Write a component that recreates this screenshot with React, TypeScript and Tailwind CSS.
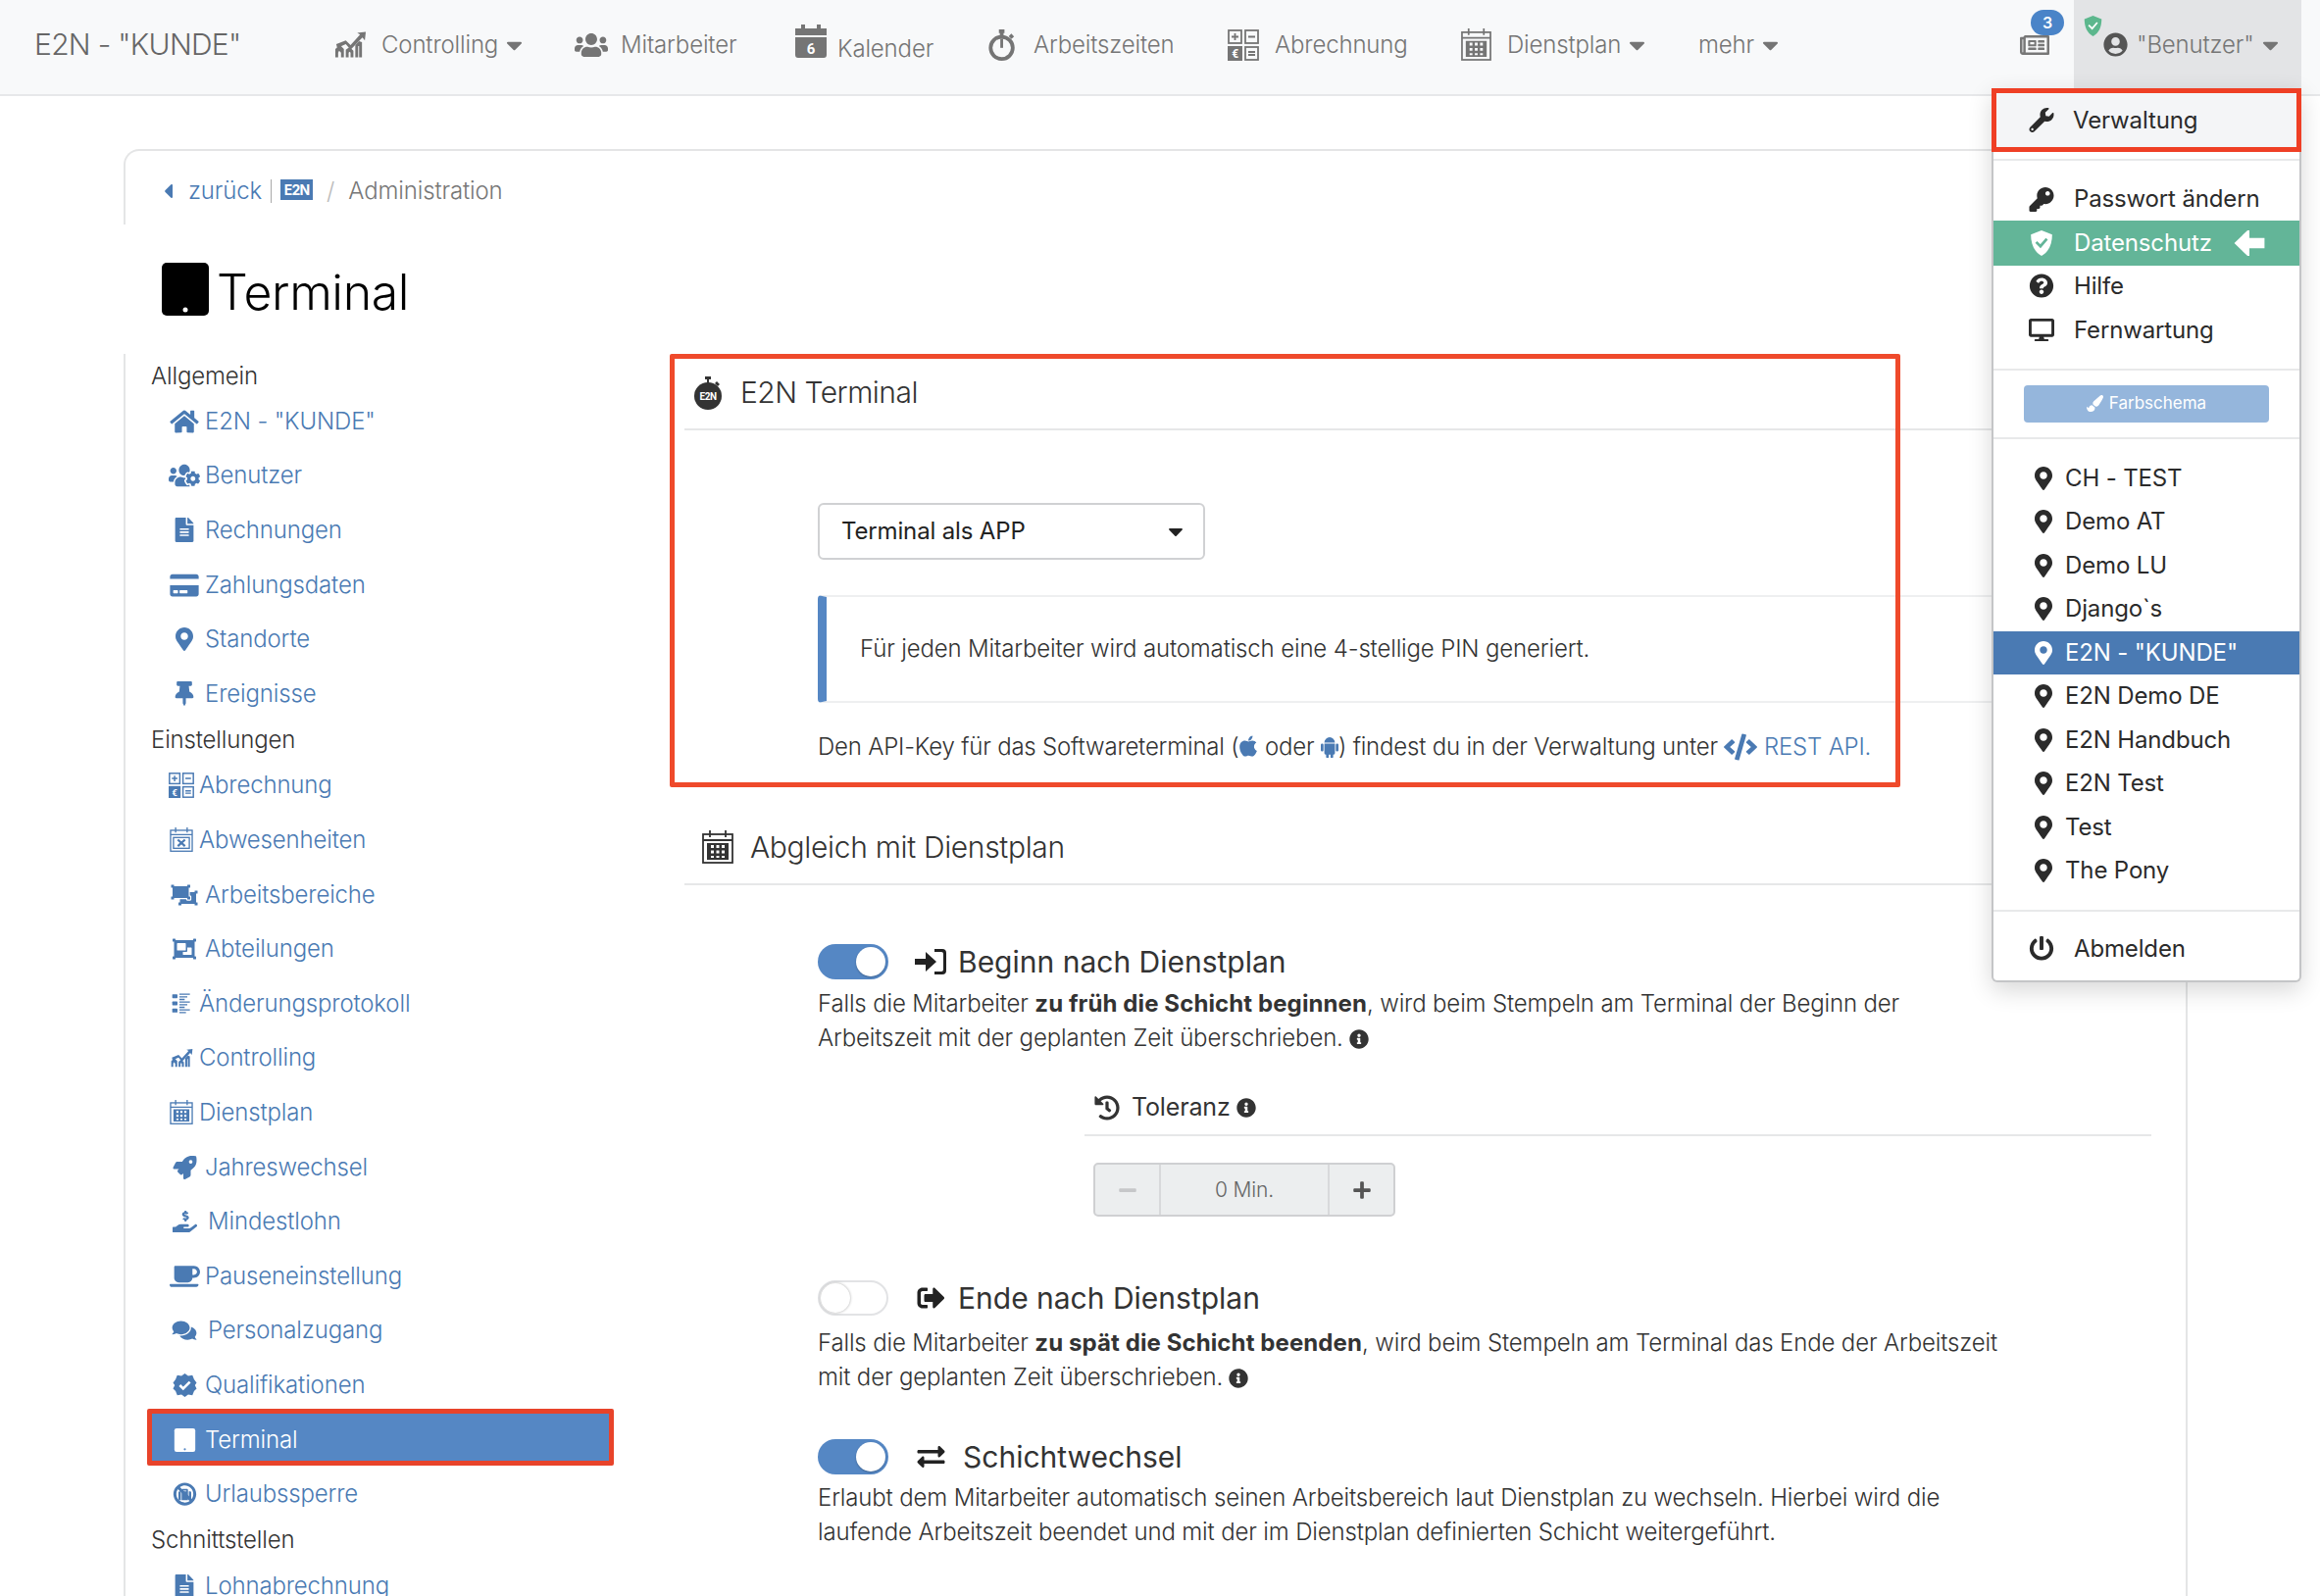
import React from "react";
import {
  FaUsers, FaRegNewspaper, FaUserCircle, FaWrench, FaKey, FaQuestionCircle, FaDesktop, FaPaintBrush,
  FaMapMarkerAlt, FaPowerOff, FaHome, FaUsersCog, FaFileAlt, FaCreditCard, FaThumbtack, FaRocket, FaCoffee,
  FaObjectUngroup, FaObjectGroup, FaHandHoldingUsd, FaSignOutAlt, FaExchangeAlt, FaHistory,
  FaInfoCircle, FaApple, FaCode, FaCaretLeft, FaCaretDown, FaBan, FaSuitcase, FaComments,
  FaMinus, FaPlus,
} from "react-icons/fa";

type IC = { className?: string };

const ChartIcon = ({ className }: IC) => (
  <svg viewBox="0 0 34 28" className={className} fill="currentColor">
    <path d="M1 27v-9l5-4 4 4v9h-3v-5l-2-2-1 2v5zM12 27v-8l4-3 4 4v7h-3v-5l-1-1-1 1v5zM22 27V14l4-4 3 1v16h-3V15l-1 0v12z" />
    <path d="M2 13 L12 9 L17 14 L27 3 L24 1 L33 0 L32 9 L29.500 6 L17 19 L12 13 L3 17z" />
  </svg>
);
const CalSix = ({ className }: IC) => (
  <svg viewBox="0 0 32 34" className={className}>
    <path fill="currentColor" d="M6 0h4v4h12V0h4v4h6v7H0V4h6zM0 13h32v18a3 3 0 0 1-3 3H3a3 3 0 0 1-3-3z" />
    <text x="16" y="30" textAnchor="middle" fontSize="15" fontWeight="700" fill="#fff" fontFamily="Roboto, sans-serif">6</text>
  </svg>
);
const Stopwatch = ({ className }: IC) => (
  <svg viewBox="0 0 30 34" className={className} fill="none" stroke="currentColor">
    <circle cx="14" cy="20" r="12" strokeWidth="4" />
    <path d="M14 20V10" strokeWidth="3" />
    <path d="M11 2h6M14 2v6M23 6l3 3" strokeWidth="4" />
  </svg>
);
const Abrech = ({ className }: IC) => (
  <svg viewBox="0 0 32 32" className={className}>
    <g fill="none" stroke="currentColor" strokeWidth="1.800">
      <rect x="1" y="1" width="13" height="13" /><rect x="18" y="1" width="13" height="13" /><rect x="18" y="18" width="13" height="13" />
      <path d="M7.500 4v7M4 7.500h7M21 7.500h7M21 23h7M21 26h7" />
    </g>
    <rect x="0" y="17" width="15" height="15" fill="currentColor" />
    <text x="7.500" y="29" textAnchor="middle" fontSize="12" fontWeight="700" fill="#fff" fontFamily="Roboto, sans-serif">€</text>
  </svg>
);
const CalGrid = ({ className }: IC) => (
  <svg viewBox="0 0 32 34" className={className}>
    <g fill="none" stroke="currentColor" strokeWidth="1.800">
      <rect x="1" y="4" width="30" height="29" />
      <path d="M8 0v7M24 0v7M1 10h30" />
    </g>
    <path fill="currentColor" d="M5 13h22v17H5zM9 15v3h3v-3zM14.500 15v3h3v-3zM20 15v3h3v-3zM9 20.500v3h3v-3zM14.500 20.500v3h3v-3zM20 20.500v3h3v-3zM9 26v2h3v-2zM14.500 26v2h3v-2zM20 26v2h3v-2z" fillRule="evenodd" />
  </svg>
);
const CalX = ({ className }: IC) => (
  <svg viewBox="0 0 32 34" className={className}>
    <g fill="none" stroke="currentColor" strokeWidth="1.800">
      <rect x="1" y="4" width="30" height="29" /><path d="M8 0v7M24 0v7M1 10h30" />
      <rect x="5" y="14" width="22" height="15" />
    </g>
    <path d="M11 17l10 9M21 17l-10 9" stroke="currentColor" strokeWidth="3" />
  </svg>
);
const ListLock = ({ className }: IC) => (
  <svg viewBox="0 0 30 32" className={className} fill="currentColor">
    <rect x="1" y="2" width="8" height="6" rx="1" /><rect x="1" y="13" width="8" height="6" rx="1" /><rect x="1" y="24" width="8" height="6" rx="1" />
    <path d="M12 1h16v2H12zM12 5h12v2H12zM12 9h8v2h-8zM12 13h16v2H12zM12 17h12v2H12zM12 21h8v2h-8zM12 25h16v2H12zM12 29h10v2H12z" />
  </svg>
);
const Tablet = ({ className, dot = "#fff" }: IC & { dot?: string }) => (
  <svg viewBox="0 0 48 54" className={className}>
    <rect x="0" y="0" width="48" height="54" rx="5" fill="currentColor" />
    <circle cx="24" cy="48" r="2.500" fill={dot} />
  </svg>
);
const Badge = ({ className }: IC) => (
  <svg viewBox="0 0 28 28" className={className}>
    <path fill="currentColor" d="M14 0l4 3 5-1 2 5 3 4-2 3 2 4-3 3-2 5-5-1-4 3-4-3-5 1-2-5-3-3 2-4-2-3 3-4 2-5 5 1z" />
    <path d="M8 14l4 4 8-8" fill="none" stroke="#fff" strokeWidth="3" />
  </svg>
);
const Ban = ({ className }: IC) => (
  <span className={"relative inline-flex items-center justify-center " + (className ?? "")}>
    <FaSuitcase className="absolute h-[13px] w-[13px]" />
    <FaBan className="h-full w-full" />
  </span>
);
const Watch2N = ({ className }: IC) => (
  <svg viewBox="0 0 30 36" className={className}>
    <circle cx="15" cy="21" r="14" fill="currentColor" />
    <path d="M12 1h6v3h-2v4h-2V4h-2zM24 6l3 3-2 2-3-3z" fill="currentColor" />
    <text x="15" y="25" textAnchor="middle" fontSize="10" fontWeight="700" fill="#fff" fontFamily="Roboto, sans-serif">E2N</text>
  </svg>
);
const Android = ({ className }: IC) => (
  <svg viewBox="0 0 20 24" className={className} fill="currentColor">
    <path d="M4 7a6 6 0 0 1 12 0zM4 8h12v11a1.500 1.500 0 0 1-1.500 1.500H14V23a1.500 1.500 0 0 1-3 0v-2.500H9V23a1.500 1.500 0 0 1-3 0v-2.500h-.5A1.500 1.500 0 0 1 4 19zM0 9.500a1.500 1.500 0 0 1 3 0v6a1.500 1.500 0 0 1-3 0zM17 9.500a1.500 1.500 0 0 1 3 0v6a1.500 1.500 0 0 1-3 0zM6.500.5l1.500 2.500M13.500.5L12 3" />
  </svg>
);
const EnterIcon = ({ className }: IC) => (
  <svg viewBox="0 0 33 28" className={className} fill="currentColor">
    <path d="M0 11h11V4l11 10-11 10v-7H0z" />
    <path d="M20 1h8a4 4 0 0 1 4 4v18a4 4 0 0 1-4 4h-8v-3h7a2 2 0 0 0 2-2V6a2 2 0 0 0-2-2h-7z" />
  </svg>
);
const FatArrow = ({ className }: IC) => (
  <svg viewBox="0 0 32 27" className={className} fill="currentColor">
    <path d="M0 13.500L14 0h2v8h16v11H16v8h-2z" />
  </svg>
);

const NAV = [
  { I: ChartIcon, ic: "h-[28px] w-[33px]", t: "Controlling", caret: true, w: "w-[245px]", gap: "ml-[15px]", y: "" },
  { I: FaUsers, ic: "h-[28px] w-[34px]", t: "Mitarbeiter", caret: false, w: "w-[225px]", gap: "ml-[13px]", y: "" },
  { I: CalSix, ic: "h-[34px] w-[32px] -translate-y-[4px]", t: "Kalender", caret: false, w: "w-[197px]", gap: "ml-[11px]", y: "translate-y-[4px]" },
  { I: Stopwatch, ic: "h-[32px] w-[29px]", t: "Arbeitszeiten", caret: false, w: "w-[244px]", gap: "ml-[17px]", y: "" },
  { I: Abrech, ic: "h-[32px] w-[32px]", t: "Abrechnung", caret: false, w: "w-[238px]", gap: "ml-[16px]", y: "" },
  { I: CalGrid, ic: "h-[33px] w-[31px]", t: "Dienstplan", caret: true, w: "w-[242px]", gap: "ml-[16px]", y: "" },
];

type Row = { I: any; ic: string; t: string; tx: string; active?: boolean };
const S1: Row[] = [
  { I: FaHome, ic: "h-[26px] w-[30px]", t: 'E2N - "KUNDE"', tx: "left-[59px]" },
  { I: FaUsersCog, ic: "h-[26px] w-[32px]", t: "Benutzer", tx: "left-[59px]" },
  { I: FaFileAlt, ic: "h-[25px] w-[20px]", t: "Rechnungen", tx: "left-[59px]" },
  { I: FaCreditCard, ic: "h-[26px] w-[30px]", t: "Zahlungsdaten", tx: "left-[59px]" },
  { I: FaMapMarkerAlt, ic: "h-[24px] w-[20px]", t: "Standorte", tx: "left-[59px]" },
  { I: FaThumbtack, ic: "h-[25px] w-[20px]", t: "Ereignisse", tx: "left-[59px]" },
];
const S2: Row[] = [
  { I: Abrech, ic: "h-[26px] w-[26px]", t: "Abrechnung", tx: "left-[53px]" },
  { I: CalX, ic: "h-[25px] w-[24px]", t: "Abwesenheiten", tx: "left-[53px]" },
  { I: FaObjectUngroup, ic: "h-[24px] w-[30px]", t: "Arbeitsbereiche", tx: "left-[59px]" },
  { I: FaObjectGroup, ic: "h-[24px] w-[26px]", t: "Abteilungen", tx: "left-[59px]" },
  { I: ListLock, ic: "h-[25px] w-[20px]", t: "Änderungsprotokoll", tx: "left-[53px]" },
  { I: ChartIcon, ic: "h-[19px] w-[25px]", t: "Controlling", tx: "left-[53px]" },
  { I: CalGrid, ic: "h-[25px] w-[24px]", t: "Dienstplan", tx: "left-[53px]" },
  { I: FaRocket, ic: "h-[24px] w-[25px]", t: "Jahreswechsel", tx: "left-[59px]" },
  { I: FaHandHoldingUsd, ic: "h-[24px] w-[25px]", t: "Mindestlohn", tx: "left-[62px]" },
  { I: FaCoffee, ic: "h-[26px] w-[31px]", t: "Pauseneinstellung", tx: "left-[59px]" },
  { I: FaComments, ic: "h-[22px] w-[26px]", t: "Personalzugang", tx: "left-[62px]" },
  { I: Badge, ic: "h-[24px] w-[25px]", t: "Qualifikationen", tx: "left-[59px]" },
  { I: Tablet, ic: "h-[24px] w-[23px]", t: "Terminal", tx: "left-[59px]", active: true },
  { I: Ban, ic: "h-[24px] w-[25px]", t: "Urlaubssperre", tx: "left-[59px]" },
];

const SideRow = ({ r }: { r: Row }) => {
  if (r.active) {
    return (
      <div className="relative z-10 -my-[1px] h-[58px] -translate-y-[3px] rounded-[2px] border-[5px] border-[#e8432a] bg-[#5587c4] text-white">
        <span className="absolute left-[18px] top-0 flex h-full w-[30px] translate-y-[3px] items-center justify-center">
          <Tablet className={r.ic} dot="#5587c4" />
        </span>
        <span className="absolute left-[54px] top-0 flex h-full translate-y-[3px] items-center">{r.t}</span>
      </div>
    );
  }
  const I = r.I;
  const iconLeft = r.tx === "left-[53px]" ? "left-[16px]" : "left-[19px]";
  return (
    <div className="relative h-[55.6px]">
      <span className={"absolute top-0 flex h-full w-[38px] items-center justify-center " + iconLeft}>
        <I className={r.ic} />
      </span>
      <span className={"absolute top-0 flex h-full items-center " + r.tx}>{r.t}</span>
    </div>
  );
};

const Toggle = ({ on }: { on: boolean }) =>
  on ? (
    <div className="flex h-[36px] w-[72px] shrink-0 items-center justify-end rounded-full bg-[#5587c4] pr-[3px]">
      <div className="h-[30px] w-[30px] rounded-full bg-white shadow-[0_1px_2px_rgba(0,0,0,0.25)]" />
    </div>
  ) : (
    <div className="flex h-[36px] w-[72px] shrink-0 items-center justify-start rounded-full border-2 border-[#e2e3e5] bg-white pl-[1px]">
      <div className="h-[30px] w-[30px] rounded-full bg-white shadow-[0_0_3px_rgba(0,0,0,0.35)]" />
    </div>
  );

const Info = () => <FaInfoCircle className="ml-[6px] inline h-[20px] w-[20px] align-[-3px] text-[#333]" />;

const Menu = ({ I, t, ic = "h-[25px] w-[26px]", h = "h-[44.5px]" }: { I: any; t: string; ic?: string; h?: string }) => (
  <div className={"flex items-center " + h}>
    <span className="flex w-[82px] justify-center pl-[16px]"><I className={ic} /></span>
    <span>{t}</span>
  </div>
);
const Pin = ({ t, active }: { t: string; active?: boolean }) => (
  <div className={"flex h-[44.5px] items-center " + (active ? "bg-[#4a7ab3] text-white" : "")}>
    <span className="flex w-[73px] justify-center pl-[28px]"><FaMapMarkerAlt className="h-[24px] w-[20px]" /></span>
    <span>{t}</span>
  </div>
);

const Caret = () => <FaCaretDown className="ml-[8px] h-[26px] w-[17px]" />;

export default function App() {
  return (
    <div className="relative h-[1628px] w-[2366px] overflow-hidden bg-white font-['Inter',sans-serif] text-[24px] font-light tracking-[-0.15px] text-[#333]">
      <nav className="flex h-[98px] items-center border-b-2 border-[#e7e8ea] bg-[#f8f9fa] pl-[35px] text-[#757575]">
        <div className="flex h-full w-[306px] items-center pb-[5px] text-[30px] tracking-[-0.7px] text-[#666]">E2N - "KUNDE"</div>
        {NAV.map((n) => {
          const I = n.I;
          return (
            <div key={n.t} className={"flex h-full items-center pb-[5px] " + n.w}>
              <I className={"shrink-0 " + n.ic} />
              <span className={n.gap + " " + n.y}>{n.t}</span>
              {n.caret && <Caret />}
            </div>
          );
        })}
        <div className="flex h-full w-[329px] items-center pb-[5px]">
          <span>mehr</span>
          <Caret />
        </div>
        <div className="relative -mt-[6px] h-[32px] w-[54px] pt-[2px]">
          <FaRegNewspaper className="h-[30px] w-[30px] -translate-x-[1px] text-[#777]" />
          <span className="absolute -top-[19px] left-[10px] flex h-[26px] w-[34px] items-center justify-center rounded-full bg-[#4a84c8] text-[16px] font-semibold text-white">3</span>
        </div>
        <div className="relative flex h-full w-[232px] items-center bg-[#e3e4e6] pb-[5px] pl-[30px]">
          <span className="absolute left-[9px] top-[16px]">
            <svg viewBox="0 0 22 24" className="h-[21px] w-[21px]">
              <path d="M11 0l10 4c0 9-3 16-10 20C4 20 1 13 1 4z" fill="#5cb78d" />
              <path d="M6 11l4 4 6-7" fill="none" stroke="#fff" strokeWidth="2" />
            </svg>
          </span>
          <FaUserCircle className="h-[25px] w-[25px] text-[#555]" />
          <span className="ml-[9px]">"Benutzer"</span>
          <Caret />
        </div>
      </nav>

      <main className="pl-[126px] pr-[135px]">
        <div className="mt-[54px] flex h-[77px] items-center rounded-tl-[16px] border-l-2 border-t-2 border-[#e4e5e6] pl-[37px] pt-[7px]">
          <FaCaretLeft className="mr-[14px] h-[24px] w-[13px] text-[#4a7ab3]" />
          <span className="text-[#4a7ab3]">zurück</span>
          <span className="mx-[9px] h-[24px] w-px bg-[#aaa]" />
          <span className="flex h-[21px] w-[33px] -translate-y-[2px] items-center justify-center border border-[#4a7ab3] bg-[#4a7ab3] text-[14px] font-bold tracking-[-0.8px] text-white">E2N</span>
          <span className="mx-[14px] text-[#bbb]">/</span>
          <span className="text-[#777]">Administration</span>
        </div>

        <div className="flex h-[132px] items-center pl-[39px] pt-[6px] text-[50px] tracking-[-0.4px] text-black">
          <Tablet className="h-[54px] w-[48px] -translate-y-[3px]" />
          <span className="ml-[8px]">Terminal</span>
        </div>

        <div className="flex h-[1270px] border-x-2 border-[#e4e5e6]">
          <aside className="w-[570px] shrink-0 pl-[22px] pr-[72px] pt-[5px] text-[#4a7ab3]">
            <div className="flex h-[36px] items-center pl-[4px] text-[#333]">Allgemein</div>
            {S1.map((r) => <SideRow key={r.t} r={r} />)}
            <div className="flex h-[38px] items-center pl-[4px] text-[#333]">Einstellungen</div>
            {S2.map((r) => <SideRow key={r.t} r={r} />)}
            <div className="flex h-[38px] items-center pl-[4px] text-[#333]">Schnittstellen</div>
            <SideRow r={{ I: FaFileAlt, ic: "h-[25px] w-[20px]", t: "Lohnabrechnung", tx: "left-[59px]" }} />
          </aside>

          <section className="relative flex-1 pr-[18px]">
            <h2 className="flex h-[78px] items-center border-b-2 border-[#e6e7e8] pl-[9px] pt-[3px] text-[30px] tracking-[-0.5px]">
              <Watch2N className="h-[36px] w-[30px]" />
              <span className="ml-[18px]">E2N Terminal</span>
            </h2>
            <div className="pl-[136px]">
              <div className="mt-[74px] flex h-[58px] w-[395px] items-center justify-between rounded-[6px] border-2 border-[#d0d1d3] pl-[22px] pr-[20px] font-normal text-[#222]">
                <span>Terminal als APP</span>
                <FaCaretDown className="h-[24px] w-[16px]" />
              </div>
              <div className="mt-[36px] flex h-[110px] items-center rounded-l-[4px] border-y-2 border-l-[9px] border-[#eeeff0] border-l-[#5587c4] pl-[34px]">
                Für jeden Mitarbeiter wird automatisch eine 4-stellige PIN generiert.
              </div>
              <p className="mt-[27px] h-[36px] leading-[36px] tracking-[-0.2px]">
                Den API-Key für das Softwareterminal (<FaApple className="inline h-[24px] w-[20px] align-[-3px] text-[#4a7ab3]" /> oder <Android className="inline h-[22px] w-[18px] align-[-3px] text-[#4a7ab3]" />) findest du in der Verwaltung unter <span className="text-[#4a7ab3]"><FaCode className="inline h-[28px] w-[34px] align-[-6px]" /> REST API.</span>
              </p>
            </div>
            <h2 className="mt-[47px] flex h-[76px] items-center border-b-2 border-[#e6e7e8] pl-[18px] text-[30px] tracking-[-0.33px]">
              <CalGrid className="h-[34px] w-[32px]" />
              <span className="ml-[17px]">Abgleich mit Dienstplan</span>
            </h2>

            <div className="pl-[136px]">
              <div className="mt-[60px] flex h-[36px] items-center">
                <Toggle on />
                <EnterIcon className="ml-[27px] h-[28px] w-[33px] text-[#222]" />
                <span className="ml-[11px] text-[30px] font-normal tracking-normal">Beginn nach Dienstplan</span>
              </div>
              <p className="mt-[8px] leading-[34.500px]">
                Falls die Mitarbeiter <b className="font-bold tracking-[0.1px]">zu früh die Schicht beginnen</b>, wird beim Stempeln am Terminal der Beginn der<br />
                Arbeitszeit mit der geplanten Zeit überschrieben.<Info />
              </p>
              <div className="ml-[272px] mt-[29px] flex h-[54px] w-[1088px] items-center border-b-2 border-[#e6e7e8] pb-[2px] pl-[10px]">
                <FaHistory className="h-[26px] w-[26px]" />
                <span className="ml-[12px] text-[25px] font-normal">Toleranz</span>
                <Info />
              </div>
              <div className="ml-[281px] mt-[27px] flex h-[55px] w-[308px] overflow-hidden rounded-[5px] border-2 border-[#cfd0d2] bg-[#eceeef] text-[21px] text-[#666]">
                <div className="flex w-[65px] items-center justify-center text-[#c6c7c9]"><FaMinus className="h-[20px] w-[20px]" /></div>
                <div className="flex flex-1 items-center justify-center border-x-2 border-[#d8d9db]">0 Min.</div>
                <div className="flex w-[65px] items-center justify-center text-[#555]"><FaPlus className="h-[20px] w-[20px]" /></div>
              </div>

              <div className="mt-[65px] flex h-[36px] items-center">
                <Toggle on={false} />
                <FaSignOutAlt className="ml-[27px] h-[28px] w-[33px] text-[#222]" />
                <span className="ml-[11px] text-[30px] font-normal tracking-normal">Ende nach Dienstplan</span>
              </div>
              <p className="mt-[11px] leading-[34.500px]">
                Falls die Mitarbeiter <b className="font-bold tracking-[0.1px]">zu spät die Schicht beenden</b>, wird beim Stempeln am Terminal das Ende der Arbeitszeit<br />
                mit der geplanten Zeit überschrieben.<Info />
              </p>

              <div className="mt-[46px] flex h-[36px] items-center">
                <Toggle on />
                <FaExchangeAlt className="ml-[27px] h-[28px] w-[33px] text-[#222]" />
                <span className="ml-[16px] text-[30px] font-normal tracking-normal">Schichtwechsel</span>
              </div>
              <p className="mt-[7px] leading-[34.500px]">
                Erlaubt dem Mitarbeiter automatisch seinen Arbeitsbereich laut Dienstplan zu wechseln. Hierbei wird die<br />
                laufende Arbeitszeit beendet und mit der im Dienstplan definierten Schicht weitergeführt.
              </p>
            </div>

            <div className="pointer-events-none absolute left-[-15px] top-0 h-[442px] w-[1255px] rounded-[2px] border-[5px] border-[#ef4a2b]" />
          </section>
        </div>
      </main>

      <div className="absolute left-[2031px] top-[90px] w-[316px] rounded-b-[6px] border-x-2 border-b-2 border-[#c4c5c7] bg-white pb-[10px] font-normal text-[#2b2b2b] shadow-[0_8px_24px_rgba(0,0,0,0.16)]">
        <div className="-mx-[2px] flex h-[65px] items-center border-[5px] border-[#ef3f25] bg-[#f4f5f7]">
          <span className="flex w-[76px] justify-center pl-[16px]"><FaWrench className="h-[25px] w-[26px]" /></span>
          <span className="ml-[2px]">Verwaltung</span>
        </div>
        <div className="mt-[7px] border-t-2 border-[#e8e9ea] pt-[18px]">
          <Menu I={FaKey} t="Passwort ändern" h="h-[42.5px]" />
          <div className="flex h-[46px] items-center justify-between bg-[#63b598] pr-[35px] text-white">
            <span className="flex items-center">
              <span className="flex w-[82px] justify-center pl-[16px]">
                <svg viewBox="0 0 22 24" className="h-[26px] w-[24px]">
                  <path d="M11 0l10 4c0 9-3 16-10 20C4 20 1 13 1 4z" fill="#fff" />
                  <path d="M6 11l4 4 6-7" fill="none" stroke="#63b598" strokeWidth="2.500" />
                </svg>
              </span>
              <span>Datenschutz</span>
            </span>
            <FatArrow className="h-[26px] w-[32px]" />
          </div>
          <Menu I={FaQuestionCircle} t="Hilfe" h="h-[42px]" />
          <Menu I={FaDesktop} t="Fernwartung" h="h-[48px]" />
        </div>
        <div className="mt-[15px] border-t-2 border-[#e8e9ea] px-[31px] py-[15px]">
          <div className="flex h-[38px] items-center justify-center rounded-[4px] bg-[#95b6dc] text-[17px] tracking-normal text-white">
            <FaPaintBrush className="mr-[6px] h-[17px] w-[17px]" />Farbschema
          </div>
        </div>
        <div className="border-t-2 border-[#e8e9ea] pt-[18px]">
          {["CH - TEST", "Demo AT", "Demo LU", "Django`s"].map((t) => <Pin key={t} t={t} />)}
          <Pin t='E2N - "KUNDE"' active />
          {["E2N Demo DE", "E2N Handbuch", "E2N Test", "Test", "The Pony"].map((t) => <Pin key={t} t={t} />)}
        </div>
        <div className="mt-[17px] border-t-2 border-[#e8e9ea] pt-[16px]">
          <Menu I={FaPowerOff} t="Abmelden" />
        </div>
      </div>
    </div>
  );
}
